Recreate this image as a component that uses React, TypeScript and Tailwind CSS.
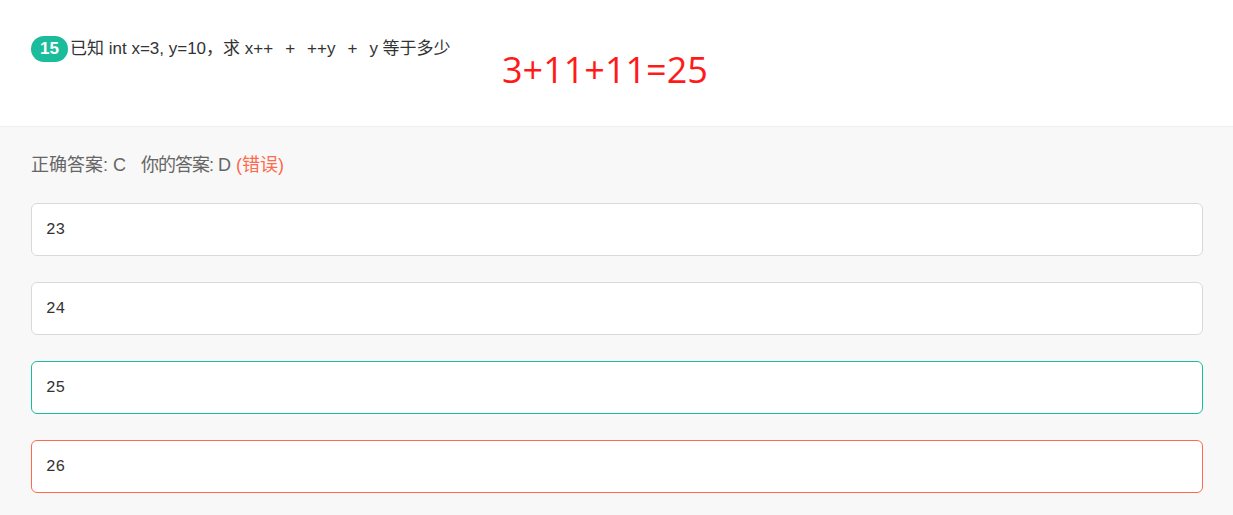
import React from "react";

const options = [
  { text: "23", border: "border-[#d9d9d9]" },
  { text: "24", border: "border-[#d9d9d9]" },
  { text: "25", border: "border-[#1abc9c]" },
  { text: "26", border: "border-[#ff6a4d]" },
];

export default function App() {
  return (
    <div className="w-[1233px] h-[515px] overflow-hidden bg-[#f8f8f8] font-['Liberation_Sans','Noto_Sans_CJK_SC',sans-serif]">
      <div className="h-[127px] bg-white border-b border-[#eeeeee] pl-[31px] flex items-start">
        <div className="w-[471px] flex items-center mt-[36px]">
          <span className="w-[37px] h-[26px] rounded-full bg-[#1abc9c] text-white text-[17px] font-bold flex items-center justify-center">
            15
          </span>
          <span className="ml-[2px] text-[17px] text-[#333] whitespace-pre">
            {"已知 int x=3, y=10，求 x++"}
            <span className="mx-[12px]">+</span>
            {"++y"}
            <span className="mx-[12px]">+</span>
            {"y 等于多少"}
          </span>
        </div>
        <div className="mt-[48px] text-[36px] leading-[44px] text-[#ff1a1a] font-['Open_Sans','Noto_Sans_CJK_SC',sans-serif]">
          3+11+11=25
        </div>
      </div>
      <div className="pl-[31px] pr-[30px]">
        <div className="h-[75px] pt-[2px] flex items-center text-[18px] text-[#666] whitespace-pre">
          {"正确答案: C   "}
          <span className="tracking-[-1px]">{"你的答案:"}</span>
          {" D "}
          <span className="text-[#ff6a4d]">(错误)</span>
        </div>
        <div className="flex flex-col gap-[26px] mt-[1px]">
          {options.map((o) => (
            <div
              key={o.text}
              className={"h-[53px] bg-white border rounded-[6px] flex items-center pl-[14px] text-[16px] text-[#333] font-mono " + o.border}
            >
              {o.text}
            </div>
          ))}
        </div>
      </div>
    </div>
  );
}
